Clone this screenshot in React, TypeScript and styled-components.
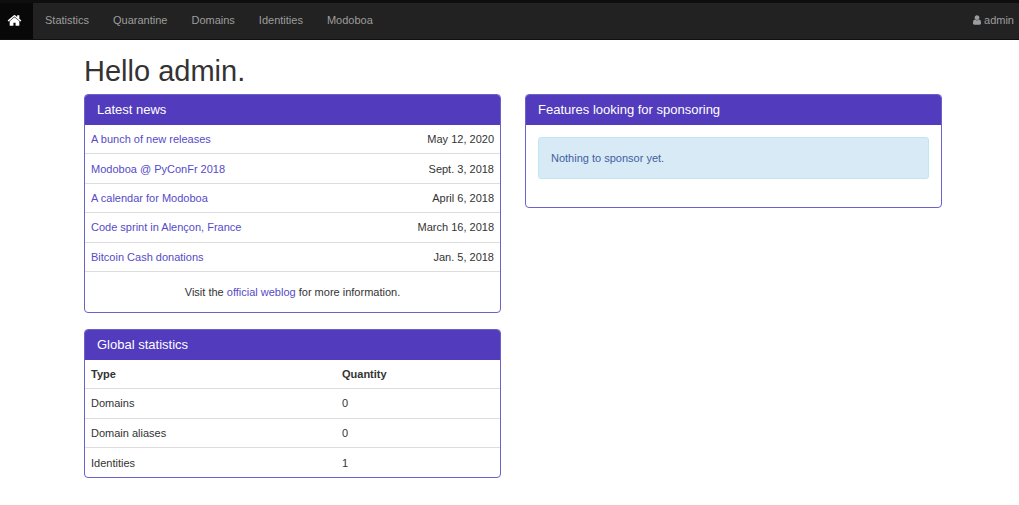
import React from "react";
import styled, { createGlobalStyle } from "styled-components";

const GlobalStyle = createGlobalStyle`
  *, *::before, *::after { box-sizing: border-box; }
  body {
    margin: 0;
    background: #fff;
    color: #333;
    font-family: "Liberation Sans", Arial, Helvetica, sans-serif;
    font-size: 11px;
    line-height: 16px;
  }
  a { color: #554bc8; text-decoration: none; }
  a:hover { text-decoration: underline; }
`;

const Navbar = styled.nav`
  display: flex;
  justify-content: space-between;
  height: 40px;
  background: #222;
  border-top: 3px solid #0e0e0e;
  border-bottom: 1px solid #101010;
`;

const NavGroup = styled.div`
  display: flex;
`;

const NavLink = styled.a<{ $active?: boolean; $end?: boolean }>`
  display: flex;
  align-items: center;
  gap: 3px;
  padding: ${(p) => (p.$active ? "0 11px 2px 7px" : p.$end ? "0 5px 2px 12px" : "0 12px 2px")};
  background: ${(p) => (p.$active ? "#080808" : "transparent")};
  color: ${(p) => (p.$active ? "#fff" : "#9d9d9d")};
`;

const Icon = styled.svg<{ $width: number; $height: number }>`
  width: ${(p) => p.$width}px;
  height: ${(p) => p.$height}px;
  fill: currentColor;
`;

const Main = styled.main`
  padding: 15px 77px 24px 84px;
`;

const Greeting = styled.h1`
  margin: 0 0 7px;
  font-size: 29px;
  font-weight: 400;
  line-height: 32px;
`;

const Columns = styled.div`
  display: grid;
  grid-template-columns: 1fr 1fr;
  align-items: start;
  gap: 24px;
`;

const Column = styled.div`
  display: grid;
  gap: 16px;
`;

const Panel = styled.section`
  border: 1px solid #6a62cb;
  border-radius: 4px;
  overflow: hidden;
`;

const PanelTitle = styled.h2`
  margin: 0;
  padding: 7px 12px 8px;
  background: #523bbd;
  color: #fff;
  font-size: 13px;
  font-weight: 400;
  line-height: 15px;
`;

const PanelBody = styled.div`
  padding: 12px 12px 28px;
`;

const PanelFooter = styled.p`
  margin: 0;
  padding: 12px;
  text-align: center;
`;

const Row = styled.tr`
  border-bottom: 1px solid #ddd;
`;

const Table = styled.table<{ $height: number; $flush?: boolean }>`
  width: 100%;
  height: ${(p) => p.$height}px;
  border-collapse: collapse;

  tbody ${Row}:last-child {
    border-bottom-width: ${(p) => (p.$flush ? 0 : 1)}px;
  }
`;

const Cell = styled.td<{ $right?: boolean }>`
  padding: 6px;
  text-align: ${(p) => (p.$right ? "right" : "left")};
`;

const HeadCell = styled.th<{ $width: string }>`
  width: ${(p) => p.$width};
  padding: 6px;
  text-align: left;
`;

const Alert = styled.div`
  padding: 12px;
  border: 1px solid #bce8f1;
  border-radius: 3px;
  background: #d9eaf7;
  color: #3f5f9f;
`;

const news = [
  ["A bunch of new releases", "May 12, 2020"],
  ["Modoboa @ PyConFr 2018", "Sept. 3, 2018"],
  ["A calendar for Modoboa", "April 6, 2018"],
  ["Code sprint in Alençon, France", "March 16, 2018"],
  ["Bitcoin Cash donations", "Jan. 5, 2018"],
];

const stats = [
  ["Domains", 0],
  ["Domain aliases", 0],
  ["Identities", 1],
];

const HomeIcon = () => (
  <Icon $width={15} $height={15} viewBox="0 0 1792 1792" aria-hidden="true">
    <path d="M1472 992v480q0 26-19 45t-45 19h-384v-384h-256v384h-384q-26 0-45-19t-19-45v-480q0-1 .5-3t.5-3l575-474 575 474q1 2 1 6zm223-69l-62 74q-8 9-21 11h-3q-13 0-21-7l-692-577-692 577q-12 8-24 7-13-2-21-11l-62-74q-8-10-7-23.5t11-21.5l719-599q32-26 76-26t76 26l244 204v-195q0-14 9-23t23-9h192q14 0 23 9t9 23v408l219 182q10 8 11 21.5t-7 23.5z" />
  </Icon>
);

const UserIcon = () => (
  <Icon $width={8} $height={10} viewBox="256 128 1280 1536" aria-hidden="true">
    <path d="M1536 1399q0 109-62.5 187t-150.5 78h-854q-88 0-150.5-78t-62.5-187q0-85 8.5-160.5t31.5-152 58.5-131 94-89 134.5-34.5q131 128 313 128t313-128q76 0 134.5 34.5t94 89 58.5 131 31.5 152 8.5 160.5zm-256-887q0 159-112.5 271.5t-271.5 112.5-271.5-112.5-112.5-271.5 112.5-271.5 271.5-112.5 271.5 112.5 112.5 271.5z" />
  </Icon>
);

export default function App() {
  return (
    <>
      <GlobalStyle />
      <Navbar>
        <NavGroup>
          <NavLink href="#home" $active aria-label="Home"><HomeIcon /></NavLink>
          {["Statistics", "Quarantine", "Domains", "Identities", "Modoboa"].map((label) => (
            <NavLink key={label} href={`#${label.toLowerCase()}`}>{label}</NavLink>
          ))}
        </NavGroup>
        <NavLink href="#user" $end><UserIcon />admin</NavLink>
      </Navbar>
      <Main>
        <Greeting>Hello admin.</Greeting>
        <Columns>
          <Column>
            <Panel>
              <PanelTitle>Latest news</PanelTitle>
              <Table $height={147}>
                <tbody>
                  {news.map(([title, date]) => (
                    <Row key={title}>
                      <Cell><a href="#news">{title}</a></Cell>
                      <Cell $right>{date}</Cell>
                    </Row>
                  ))}
                </tbody>
              </Table>
              <PanelFooter>
                Visit the <a href="#weblog">official weblog</a> for more information.
              </PanelFooter>
            </Panel>
            <Panel>
              <PanelTitle>Global statistics</PanelTitle>
              <Table $height={117} $flush>
                <thead>
                  <Row>
                    <HeadCell $width="auto">Type</HeadCell>
                    <HeadCell $width="164px">Quantity</HeadCell>
                  </Row>
                </thead>
                <tbody>
                  {stats.map(([type, quantity]) => (
                    <Row key={type}>
                      <Cell>{type}</Cell>
                      <Cell>{quantity}</Cell>
                    </Row>
                  ))}
                </tbody>
              </Table>
            </Panel>
          </Column>
          <Panel>
            <PanelTitle>Features looking for sponsoring</PanelTitle>
            <PanelBody>
              <Alert>Nothing to sponsor yet.</Alert>
            </PanelBody>
          </Panel>
        </Columns>
      </Main>
    </>
  );
}
